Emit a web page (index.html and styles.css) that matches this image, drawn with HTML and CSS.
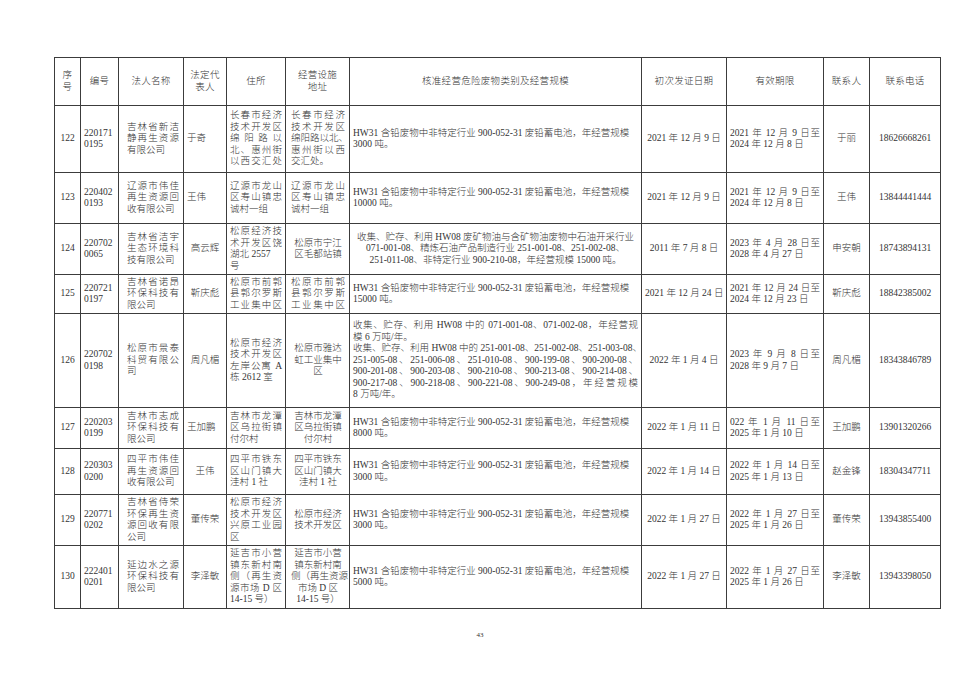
FILE: index.html
```html
<!DOCTYPE html>
<html lang="zh-CN">
<head>
<meta charset="utf-8">
<title>危险废物经营许可证</title>
<link rel="stylesheet" href="styles.css">
</head>
<body>
<div class="page">
<table class="tbl">
<colgroup>
<col class="w-no"><col class="w-id"><col class="w-name"><col class="w-rep"><col class="w-addr"><col class="w-fac"><col class="w-scope"><col class="w-date"><col class="w-valid"><col class="w-ct"><col class="w-tel">
</colgroup>
<thead>
<tr class="h-head">
<th>序<br>号</th><th>编号</th><th>法人名称</th><th>法定代<br>表人</th><th>住所</th><th>经营设施<br>地址</th><th>核准经营危险废物类别及经营规模</th><th>初次发证日期</th><th>有效期限</th><th>联系人</th><th>联系电话</th>
</tr>
</thead>
<tbody>
<tr class="h67">
<td class="ctr">122</td>
<td class="lft">220171<br>0195</td>
<td class="dist nm"><span class="ln">吉林省新洁</span><span class="ln">静再生资源</span><span class="ln e">有限公司</span></td>
<td class="lft">于奇</td>
<td class="dist"><span class="ln">长春市经济</span><span class="ln">技术开发区</span><span class="ln">绵阳路以</span><span class="ln">北、惠州街</span><span class="ln">以西交汇处</span></td>
<td class="dist fc"><span class="ln">长春市经济</span><span class="ln">技术开发区</span><span class="ln e">绵阳路以北、</span><span class="ln">惠州街以西</span><span class="ln e">交汇处。</span></td>
<td class="lft">HW31 含铅废物中非特定行业 900-052-31 废铅蓄电池，年经营规模<br>3000 吨。</td>
<td class="ctr">2021 年 12 月 9 日</td>
<td class="dist"><span class="ln">2021 年 12 月 9 日至</span><span class="ln e">2024 年 12 月 8 日</span></td>
<td class="ctr">于丽</td>
<td class="ctr">18626668261</td>
</tr>
<tr class="h51">
<td class="ctr">123</td>
<td class="lft">220402<br>0193</td>
<td class="dist nm"><span class="ln">辽源市伟佳</span><span class="ln">再生资源回</span><span class="ln e">收有限公司</span></td>
<td class="lft">王伟</td>
<td class="dist"><span class="ln">辽源市龙山</span><span class="ln">区寿山镇忠</span><span class="ln e">诚村一组</span></td>
<td class="dist fc"><span class="ln">辽源市龙山</span><span class="ln">区寿山镇忠</span><span class="ln e">诚村一组</span></td>
<td class="lft">HW31 含铅废物中非特定行业 900-052-31 废铅蓄电池，年经营规模<br>10000 吨。</td>
<td class="ctr">2021 年 12 月 9 日</td>
<td class="dist"><span class="ln">2021 年 12 月 9 日至</span><span class="ln e">2024 年 12 月 8 日</span></td>
<td class="ctr">王伟</td>
<td class="ctr">13844441444</td>
</tr>
<tr class="h51">
<td class="ctr">124</td>
<td class="lft">220702<br>0065</td>
<td class="dist nm"><span class="ln">吉林省洁宇</span><span class="ln">生态环境科</span><span class="ln e">技有限公司</span></td>
<td class="ctr">高云辉</td>
<td class="dist"><span class="ln">松原经济技</span><span class="ln">术开发区饶</span><span class="ln e">湖北 2557</span><span class="ln e">号</span></td>
<td class="ctr fc">松原市宁江<br>区毛都站镇</td>
<td class="ctr">收集、贮存、利用 HW08 废矿物油与含矿物油废物中石油开采行业<br>071-001-08、精炼石油产品制造行业 251-001-08、251-002-08、<br>251-011-08、非特定行业 900-210-08，年经营规模 15000 吨。</td>
<td class="ctr">2011 年 7 月 8 日</td>
<td class="dist"><span class="ln">2023 年 4 月 28 日至</span><span class="ln e">2028 年 4 月 27 日</span></td>
<td class="ctr">申安朝</td>
<td class="ctr">18743894131</td>
</tr>
<tr class="h39">
<td class="ctr">125</td>
<td class="lft">220721<br>0197</td>
<td class="dist nm"><span class="ln">吉林省诺昂</span><span class="ln">环保科技有</span><span class="ln e">限公司</span></td>
<td class="ctr">靳庆彪</td>
<td class="dist"><span class="ln">松原市前郭</span><span class="ln">县郭尔罗斯</span><span class="ln">工业集中区</span></td>
<td class="dist fc"><span class="ln">松原市前郭</span><span class="ln">县郭尔罗斯</span><span class="ln">工业集中区</span></td>
<td class="lft">HW31 含铅废物中非特定行业 900-052-31 废铅蓄电池，年经营规模<br>15000 吨。</td>
<td class="ctr">2021 年 12 月 24 日</td>
<td class="dist"><span class="ln">2021 年 12 月 24 日至</span><span class="ln e">2024 年 12 月 23 日</span></td>
<td class="ctr">靳庆彪</td>
<td class="ctr">18842385002</td>
</tr>
<tr class="h94">
<td class="ctr">126</td>
<td class="lft">220702<br>0198</td>
<td class="dist nm"><span class="ln">松原市景泰</span><span class="ln">科贸有限公</span><span class="ln e">司</span></td>
<td class="ctr">周凡楣</td>
<td class="dist"><span class="ln">松原市经济</span><span class="ln">技术开发区</span><span class="ln">左岸公寓 A</span><span class="ln e">栋 2612 室</span></td>
<td class="ctr fc">松原市雅达<br>虹工业集中<br>区</td>
<td class="dist"><span class="ln">收集、贮存、利用 HW08 中的 071-001-08、071-002-08，年经营规</span><span class="ln e">模 6 万吨/年。</span><span class="ln">收集、贮存、利用 HW08 中的 251-001-08、251-002-08、251-003-08、</span><span class="ln">251-005-08、251-006-08、251-010-08、900-199-08、900-200-08、</span><span class="ln">900-201-08、900-203-08、900-210-08、900-213-08、900-214-08、</span><span class="ln">900-217-08、900-218-08、900-221-08、900-249-08，年经营规模</span><span class="ln e">8 万吨/年。</span></td>
<td class="ctr">2022 年 1 月 4 日</td>
<td class="dist"><span class="ln">2023 年 9 月 8 日至</span><span class="ln e">2028 年 9 月 7 日</span></td>
<td class="ctr">周凡楣</td>
<td class="ctr">18343846789</td>
</tr>
<tr class="h41">
<td class="ctr">127</td>
<td class="lft">220203<br>0199</td>
<td class="dist nm"><span class="ln">吉林市志成</span><span class="ln">环保科技有</span><span class="ln e">限公司</span></td>
<td class="lft">王加鹏</td>
<td class="dist"><span class="ln">吉林市龙潭</span><span class="ln">区乌拉街镇</span><span class="ln e">付尔村</span></td>
<td class="ctr fc">吉林市龙潭<br>区乌拉街镇<br>付尔村</td>
<td class="lft">HW31 含铅废物中非特定行业 900-052-31 废铅蓄电池，年经营规模<br>8000 吨。</td>
<td class="ctr">2022 年 1 月 11 日</td>
<td class="dist"><span class="ln">022 年 1 月 11 日至</span><span class="ln e">2025 年 1 月 10 日</span></td>
<td class="ctr">王加鹏</td>
<td class="ctr">13901320266</td>
</tr>
<tr class="h46">
<td class="ctr">128</td>
<td class="lft">220303<br>0200</td>
<td class="dist nm"><span class="ln">四平市伟佳</span><span class="ln">再生资源回</span><span class="ln e">收有限公司</span></td>
<td class="ctr">王伟</td>
<td class="dist"><span class="ln">四平市铁东</span><span class="ln">区山门镇大</span><span class="ln e">洼村 1 社</span></td>
<td class="ctr fc">四平市铁东<br>区山门镇大<br>洼村 1 社</td>
<td class="lft">HW31 含铅废物中非特定行业 900-052-31 废铅蓄电池，年经营规模<br>3000 吨。</td>
<td class="ctr">2022 年 1 月 14 日</td>
<td class="dist"><span class="ln">2022 年 1 月 14 日至</span><span class="ln e">2025 年 1 月 13 日</span></td>
<td class="ctr">赵金锋</td>
<td class="ctr">18304347711</td>
</tr>
<tr class="h51">
<td class="ctr">129</td>
<td class="lft">220771<br>0202</td>
<td class="dist nm"><span class="ln">吉林省侍荣</span><span class="ln">环保再生资</span><span class="ln">源回收有限</span><span class="ln e">公司</span></td>
<td class="ctr">董传荣</td>
<td class="dist"><span class="ln">松原市经济</span><span class="ln">技术开发区</span><span class="ln">兴原工业园</span><span class="ln e">区</span></td>
<td class="ctr fc">松原市经济<br>技术开发区</td>
<td class="lft">HW31 含铅废物中非特定行业 900-052-31 废铅蓄电池，年经营规模<br>3000 吨。</td>
<td class="ctr">2022 年 1 月 27 日</td>
<td class="dist"><span class="ln">2022 年 1 月 27 日至</span><span class="ln e">2025 年 1 月 26 日</span></td>
<td class="ctr">董传荣</td>
<td class="ctr">13943855400</td>
</tr>
<tr class="h63">
<td class="ctr">130</td>
<td class="lft">222401<br>0201</td>
<td class="dist nm"><span class="ln">延边水之源</span><span class="ln">环保科技有</span><span class="ln e">限公司</span></td>
<td class="ctr">李泽敏</td>
<td class="dist"><span class="ln">延吉市小营</span><span class="ln">镇东新村南</span><span class="ln">侧（再生资</span><span class="ln">源市场 D 区</span><span class="ln e">14-15 号）</span></td>
<td class="ctr fc">延吉市小营<br>镇东新村南<br>侧（再生资源<br>市场 D 区<br>14-15 号）</td>
<td class="lft">HW31 含铅废物中非特定行业 900-052-31 废铅蓄电池，年经营规模<br>5000 吨。</td>
<td class="ctr">2022 年 1 月 27 日</td>
<td class="dist"><span class="ln">2022 年 1 月 27 日至</span><span class="ln e">2025 年 1 月 26 日</span></td>
<td class="ctr">李泽敏</td>
<td class="ctr">13943398050</td>
</tr>
</tbody>
</table>
<div class="pn">43</div>
</div>
</body>
</html>
```

FILE: styles.css
```css
html, body {
  margin: 0;
  padding: 0;
  background: #ffffff;
}

.page {
  width: 960px;
  height: 679px;
  padding: 57px 0 0 54px;
  box-sizing: border-box;
  font-family: "Liberation Serif", "Noto Sans CJK SC", serif;
  color: #333333;
}

.tbl {
  border-collapse: collapse;
  table-layout: fixed;
  width: 886px;
  font-size: 9.5px;
  line-height: 11.5px;
  font-weight: 300;
}

.w-no { width: 26px; }
.w-id { width: 38px; }
.w-name { width: 65px; }
.w-rep { width: 43px; }
.w-addr { width: 59px; }
.w-fac { width: 64px; }
.w-scope { width: 292px; }
.w-date { width: 85px; }
.w-valid { width: 97px; }
.w-ct { width: 46px; }
.w-tel { width: 71px; }

.tbl th,
.tbl td {
  border: 1px solid #3c3c3c;
  padding: 0 3px;
  vertical-align: middle;
  overflow: hidden;
  white-space: nowrap;
}

.tbl th {
  font-weight: 300;
  text-align: center;
  letter-spacing: 0.3px;
}

.tbl td.nm {
  padding: 0 4px 0 8px;
}

.tbl td.fc {
  padding: 0 4px 0 5px;
}

.h-head { height: 48px; }
.h67 { height: 67px; }
.h51 { height: 51px; }
.h39 { height: 39px; }
.h94 { height: 94px; }
.h41 { height: 41px; }
.h46 { height: 46px; }
.h63 { height: 63px; }

.ctr { text-align: center; }
.lft { text-align: left; }

.dist .ln {
  display: block;
  text-align: justify;
  text-align-last: justify;
}

.dist .ln.e {
  text-align-last: left;
}

.fc.ctr .ln.e,
.fc.ctr .ln {
  text-align-last: center;
}

.pn {
  width: 852px;
  margin-top: 22px;
  text-align: center;
  font-size: 7px;
  line-height: 8px;
  color: #333333;
}
```
